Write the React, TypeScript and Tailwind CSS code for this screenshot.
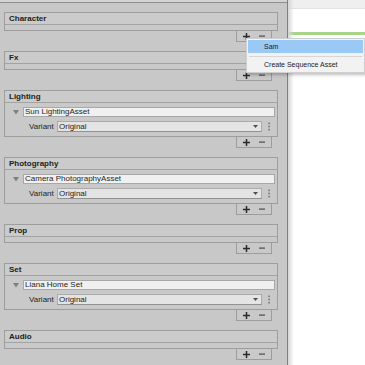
import React from "react";

type Item = { name: string };
type Section = { title: string; item?: Item };

const sections: Section[] = [
  { title: "Character" },
  { title: "Fx" },
  { title: "Lighting", item: { name: "Sun LightingAsset" } },
  { title: "Photography", item: { name: "Camera PhotographyAsset" } },
  { title: "Prop" },
  { title: "Set", item: { name: "Liana Home Set" } },
  { title: "Audio" },
];

function PlusMinus() {
  return (
    <div className="flex justify-end pr-[6px]">
      <div className="flex h-[11px] w-[36px] border border-t-0 border-[#9d9d9d] bg-[#c9c9c9] pl-[1px]">
        <div className="flex w-[16px] items-center justify-center">
          <svg width="7" height="7" viewBox="0 0 7 7">
            <rect x="0" y="2.75" width="7" height="1.5" fill="#2a2a2a" />
            <rect x="2.75" y="0" width="1.5" height="7" fill="#2a2a2a" />
          </svg>
        </div>
        <div className="flex w-[16px] items-center justify-center">
          <svg width="6" height="2" viewBox="0 0 6 2">
            <rect x="0" y="0.5" width="6" height="1.2" fill="#4a4a4a" />
          </svg>
        </div>
      </div>
    </div>
  );
}

function AssetRows({ item }: { item: Item }) {
  return (
    <div className="flex flex-col gap-[4px] px-[2px] py-[4px]">
      <div className="flex items-center">
        <div className="flex w-[16px] items-center justify-center pl-[2px]">
          <svg width="6" height="5" viewBox="0 0 6 5">
            <path d="M0 0 L6 0 L3 4.5 Z" fill="#7f7f7f" />
          </svg>
        </div>
        <div className="h-[10px] flex-1 border border-[#a8a8a8] bg-[#f0f0f0] pl-[1px] text-[8px] leading-[8px] text-[#1e1e1e]">
          {item.name}
        </div>
      </div>
      <div className="flex items-center pl-[22px]">
        <div className="w-[28px] text-[8px] leading-[10px] text-[#1e1e1e]">Variant</div>
        <div className="flex h-[11px] w-[205px] items-center justify-between border border-[#ababab] border-b-[#929292] bg-[#e4e4e4] pl-[1px] pr-[3px] text-[8px] leading-[9px] text-[#1e1e1e]">
          <span>Original</span>
          <svg width="5" height="3" viewBox="0 0 5 3">
            <path d="M0 0 L5 0 L2.5 3 Z" fill="#4f4f4f" />
          </svg>
        </div>
        <div className="flex flex-1 justify-center">
          <svg width="2" height="9" viewBox="0 0 2 9">
            <rect x="0.5" y="0.5" width="1.2" height="1.6" fill="#5a5a5a" />
            <rect x="0.5" y="3.7" width="1.2" height="1.6" fill="#5a5a5a" />
            <rect x="0.5" y="6.9" width="1.2" height="1.6" fill="#5a5a5a" />
          </svg>
        </div>
      </div>
    </div>
  );
}

function ListSection({ section }: { section: Section }) {
  return (
    <div className="flex flex-col">
      <div className="border border-[#9d9d9d] bg-[#c9c9c9]">
        <div className="h-[12px] border-b border-[#a3a3a3] bg-[#cbcbcb] pl-[4px] text-[8px] font-bold leading-[11px] text-[#1c1c1c]">
          {section.title}
        </div>
        {section.item ? <AssetRows item={section.item} /> : <div className="h-[5px]" />}
      </div>
      <PlusMinus />
    </div>
  );
}

export default function App() {
  return (
    <div className="relative flex h-[365px] w-[365px] overflow-hidden bg-white font-['Liberation_Sans',Arial,sans-serif]">
      <div className="flex h-full w-[288px] flex-col border-r border-[#808080] bg-[#c8c8c8]">
        <div className="h-[2px] bg-[#d3d3d3]" />
        <div className="h-[1px] bg-[#8e8e8e]" />
        <div className="flex flex-col gap-[9px] pl-[4px] pr-[9px] pt-[9px]">
          {sections.map((s) => (
            <ListSection key={s.title} section={s} />
          ))}
        </div>
      </div>

      <div className="flex flex-1 flex-col">
        <div className="h-[9px] border-b border-[#e2e2e2] bg-[#efefef]" />
        <div className="h-[23px] bg-white" />
        <div className="h-[3px] bg-[#a8d58a]" />
        <div className="flex-1 bg-white" />
      </div>
      <div className="pointer-events-none absolute left-[288px] top-0 h-full w-[6px] bg-gradient-to-r from-[#d6d6d6] to-transparent" />

      <div className="absolute left-[246px] top-[38px] flex w-[119px] flex-col border border-[#cfcfcf] bg-[#f2f2f2] p-[1px] shadow-[2px_2px_3px_rgba(0,0,0,0.25)]">
        <div className="h-[13px] bg-[#99c9f4] pl-[16px] text-[7px] leading-[13px] text-[#1a1a1a]">Sam</div>
        <div className="mx-[1px] my-[3px] h-[1px] bg-[#d6d6d6]" />
        <div className="h-[11px] pl-[16px] text-[7px] leading-[10px] text-[#1a1a1a]">Create Sequence Asset</div>
      </div>
    </div>
  );
}
